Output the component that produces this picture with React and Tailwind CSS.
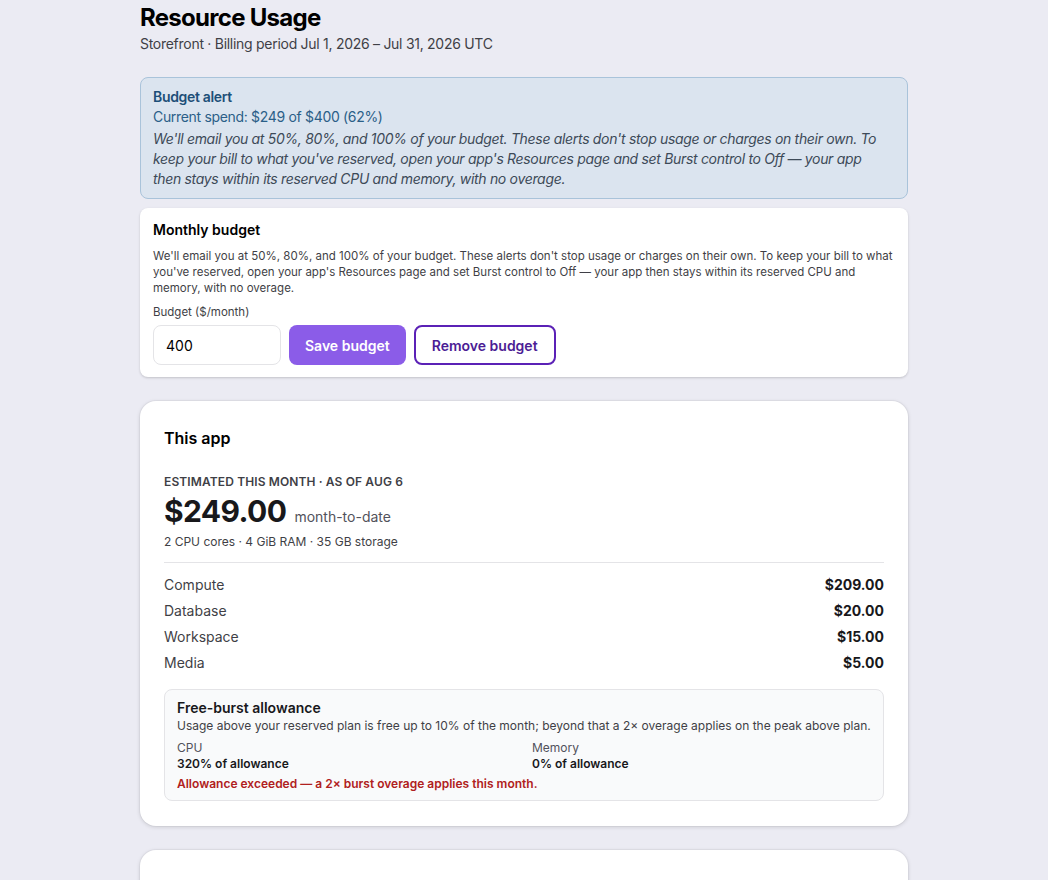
import { useState } from 'react';

const breakdown = [
  { label: 'Compute', amount: '$209.00' },
  { label: 'Database', amount: '$20.00' },
  { label: 'Workspace', amount: '$15.00' },
  { label: 'Media', amount: '$5.00' },
];

const alertCopy =
  "We'll email you at 50%, 80%, and 100% of your budget. These alerts don't stop usage or charges on their own. To keep your bill to what you've reserved, open your app's Resources page and set Burst control to Off — your app then stays within its reserved CPU and memory, with no overage.";

function BudgetAlert() {
  return (
    <div className="rounded-lg border border-[#a9c3da] bg-[#dbe4ef] px-3 pt-[9px] pb-[9px] tracking-[-0.02em]">
      <div className="text-[14px] font-semibold leading-5 text-[#1d4f78]">Budget alert</div>
      <div className="text-[14px] leading-5 text-[#2b5f88]">Current spend: $249 of $400 (62%)</div>
      <p className="mt-[2px] pr-3 text-[14px] italic leading-5 text-[#3d4a58]">{alertCopy}</p>
    </div>
  );
}

function MonthlyBudget() {
  const [value, setValue] = useState('400');
  return (
    <div className="rounded-lg bg-white px-[13px] pt-[12px] pb-3 shadow-[0_1px_3px_rgba(0,0,0,0.12),0_1px_2px_rgba(0,0,0,0.06)]">
      <h3 className="text-[14px] font-semibold leading-5 text-black">Monthly budget</h3>
      <p className="mt-[8px] text-[11.5px] leading-4 text-[#3f3f46]">{alertCopy}</p>
      <label className="mt-[8px] block text-[11.5px] leading-4 text-[#3f3f46]">Budget ($/month)</label>
      <div className="mt-[5px] flex items-center gap-2">
        <input
          value={value}
          onChange={(e) => setValue(e.target.value)}
          className="h-10 w-32 rounded-lg border border-[#e4e4e7] bg-white px-3 text-[14px] text-black outline-none"
        />
        <button className="h-10 rounded-lg bg-[#8b5ce8] px-4 text-[14px] font-semibold text-white">Save budget</button>
        <button className="h-10 rounded-lg border-2 border-[#5b21b6] bg-white px-4 text-[14px] font-semibold text-[#4c1d95]">
          Remove budget
        </button>
      </div>
    </div>
  );
}

function ThisApp() {
  return (
    <div className="rounded-2xl bg-white px-6 pt-[25px] pb-[25px] shadow-[0_1px_4px_rgba(0,0,0,0.14),0_0_0_1px_rgba(0,0,0,0.03)]">
      <h2 className="text-[16px] font-semibold leading-6 text-black">This app</h2>
      <div className="mt-[24px] text-[12px] font-semibold uppercase leading-4 tracking-[0.01em] text-[#3f3f46]">
        Estimated this month · as of Aug 6
      </div>
      <div className="mt-[3px] flex items-baseline gap-2">
        <span className="text-[30px] font-bold leading-9 tracking-[-0.02em] text-[#18181b]">$249.00</span>
        <span className="text-[14px] text-[#52525b]">month-to-date</span>
      </div>
      <div className="mt-[5px] text-[12px] leading-4 text-[#3f3f46]">2 CPU cores · 4 GiB RAM · 35 GB storage</div>
      <div className="mt-3 border-t border-[#e4e4e7]" />
      <div className="mt-[8px] flex flex-col">
        {breakdown.map((row) => (
          <div key={row.label} className="flex h-[26px] items-center justify-between text-[14px]">
            <span className="text-[#3f3f46]">{row.label}</span>
            <span className="font-bold text-[#18181b]">{row.amount}</span>
          </div>
        ))}
      </div>
      <div className="mt-[14px] rounded-lg border border-[#e4e4e7] bg-[#f9fafb] px-3 pt-[8px] pb-[8px]">
        <div className="text-[14px] font-semibold leading-5 text-[#18181b]">Free-burst allowance</div>
        <div className="text-[12px] leading-4 text-[#3f3f46]">
          Usage above your reserved plan is free up to 10% of the month; beyond that a 2× overage applies on the peak above plan.
        </div>
        <div className="mt-[6px] grid grid-cols-2 gap-4">
          <div>
            <div className="text-[12px] leading-4 text-[#52525b]">CPU</div>
            <div className="text-[12px] font-semibold leading-4 text-[#18181b]">320% of allowance</div>
          </div>
          <div>
            <div className="text-[12px] leading-4 text-[#52525b]">Memory</div>
            <div className="text-[12px] font-semibold leading-4 text-[#18181b]">0% of allowance</div>
          </div>
        </div>
        <div className="mt-1 text-[12px] font-semibold leading-4 text-[#b02020]">
          Allowance exceeded — a 2× burst overage applies this month.
        </div>
      </div>
    </div>
  );
}

export default function App() {
  return (
    <div className="min-h-screen bg-[#ebebf3] font-['Inter',sans-serif] text-black">
      <div className="mx-auto max-w-3xl">
        <h1 className="pt-[2px] text-[24px] font-bold leading-8 tracking-[-0.03em] text-black">Resource Usage</h1>
        <div className="text-[14px] leading-5 tracking-[-0.02em] text-[#3f3f46]">
          Storefront · Billing period Jul 1, 2026 – Jul 31, 2026 UTC
        </div>
        <div className="mt-[23px] flex flex-col gap-[9px]">
          <BudgetAlert />
          <MonthlyBudget />
        </div>
        <div className="mt-6 flex flex-col gap-6">
          <ThisApp />
          <div className="h-40 rounded-2xl bg-white shadow-[0_1px_4px_rgba(0,0,0,0.14),0_0_0_1px_rgba(0,0,0,0.03)]" />
        </div>
      </div>
    </div>
  );
}
